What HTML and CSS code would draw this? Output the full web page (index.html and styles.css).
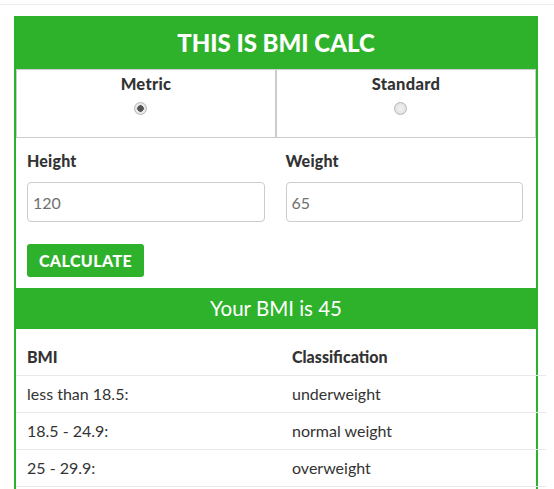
FILE: index.html
```html
<!DOCTYPE html>
<html lang="en">
<head>
<meta charset="utf-8">
<title>BMI Calc</title>
<link rel="stylesheet" href="styles.css">
</head>
<body>
<div class="topline"></div>
<main class="calc">
  <h1 class="calc-title">THIS IS BMI CALC</h1>
  <div class="units">
    <label class="unit">
      <span class="unit-name">Metric</span>
      <input type="radio" name="unit" class="radio" checked>
    </label>
    <label class="unit">
      <span class="unit-name">Standard</span>
      <input type="radio" name="unit" class="radio">
    </label>
  </div>
  <form class="form">
    <div class="fields">
      <div class="field">
        <label class="field-label">Height</label>
        <input type="text" class="field-input" value="120">
      </div>
      <div class="field">
        <label class="field-label">Weight</label>
        <input type="text" class="field-input" value="65">
      </div>
    </div>
    <button type="button" class="btn">CALCULATE</button>
  </form>
  <div class="result">Your BMI is 45</div>
  <table class="table">
    <thead>
      <tr><th>BMI</th><th>Classification</th></tr>
    </thead>
    <tbody>
      <tr><td>less than 18.5:</td><td>underweight</td></tr>
      <tr><td>18.5 - 24.9:</td><td>normal weight</td></tr>
      <tr><td>25 - 29.9:</td><td>overweight</td></tr>
    </tbody>
  </table>
  <div class="spacer"></div>
</main>
</body>
</html>
```
FILE: styles.css
```css
* { box-sizing: border-box; }
html, body { margin: 0; padding: 0; background: #fff; }
body {
  font-family: "Lato", "Liberation Sans", sans-serif;
  color: #333;
  font-size: 16px;
}
.topline {
  height: 5px;
  border-bottom: 1px solid #ececec;
}
.calc {
  width: 524px;
  margin: 11px 0 0 14px;
  border-left: 2px solid #2eb22b;
  border-right: 2px solid #2eb22b;
}
.calc-title {
  margin: 0 -2px;
  height: 53px;
  line-height: 53px;
  background: #2eb22b;
  color: #fff;
  text-align: center;
  font-size: 24px;
  font-weight: 900;
}
.units {
  display: grid;
  grid-template-columns: 1fr 1fr;
}
.unit {
  height: 69px;
  border: 1px solid #cccccc;
  display: flex;
  flex-direction: column;
  align-items: center;
  padding-top: 2px;
}
.unit-name {
  font-weight: 900;
  font-size: 16.5px;
  line-height: 24px;
  letter-spacing: 0.3px;
}
.radio {
  appearance: none;
  -webkit-appearance: none;
  width: 13px;
  height: 13px;
  margin: 6px 12px 0 0;
  border-radius: 50%;
  border: 1px solid #b5b5b5;
  background: radial-gradient(circle, #f2f2f2 0, #dcdcdc 100%);
}
.radio:checked {
  background: radial-gradient(circle, #555 0 3px, #e8e8e8 3.5px 100%);
}
.form {
  padding: 11px 13px 11px 11px;
}
.fields {
  display: grid;
  grid-template-columns: 1fr 1fr;
  column-gap: 21px;
}
.field-label {
  display: block;
  font-weight: 900;
  line-height: 24px;
  margin-bottom: 9px;
  letter-spacing: 0.2px;
}
.field-input {
  display: block;
  width: 100%;
  height: 40px;
  border: 1px solid #cccccc;
  border-radius: 4px;
  padding: 0 5px;
  font-family: inherit;
  font-size: 16px;
  color: #707070;
}
.btn {
  margin-top: 22px;
  height: 33px;
  width: 117px;
  padding: 0;
  background: #2eb22b;
  color: #fff;
  border: 0;
  border-radius: 3px;
  font-family: inherit;
  font-size: 16px;
  font-weight: 900;
  letter-spacing: 0.4px;
}
.result {
  height: 41px;
  line-height: 41px;
  background: #2eb22b;
  color: #fff;
  text-align: center;
  font-size: 20.5px;
  font-weight: 400;
}
.table {
  width: 530px;
  border-collapse: collapse;
  table-layout: fixed;
}
.table th {
  text-align: left;
  font-weight: 900;
  padding: 16px 11px 6px;
  line-height: 24px;
}
.table td {
  border-top: 1px solid #e9e9e9;
  border-bottom: 1px solid #e9e9e9;
  padding: 6px 11px;
  line-height: 24px;
  height: 36px;
}
.spacer {
  height: 20px;
}
```
